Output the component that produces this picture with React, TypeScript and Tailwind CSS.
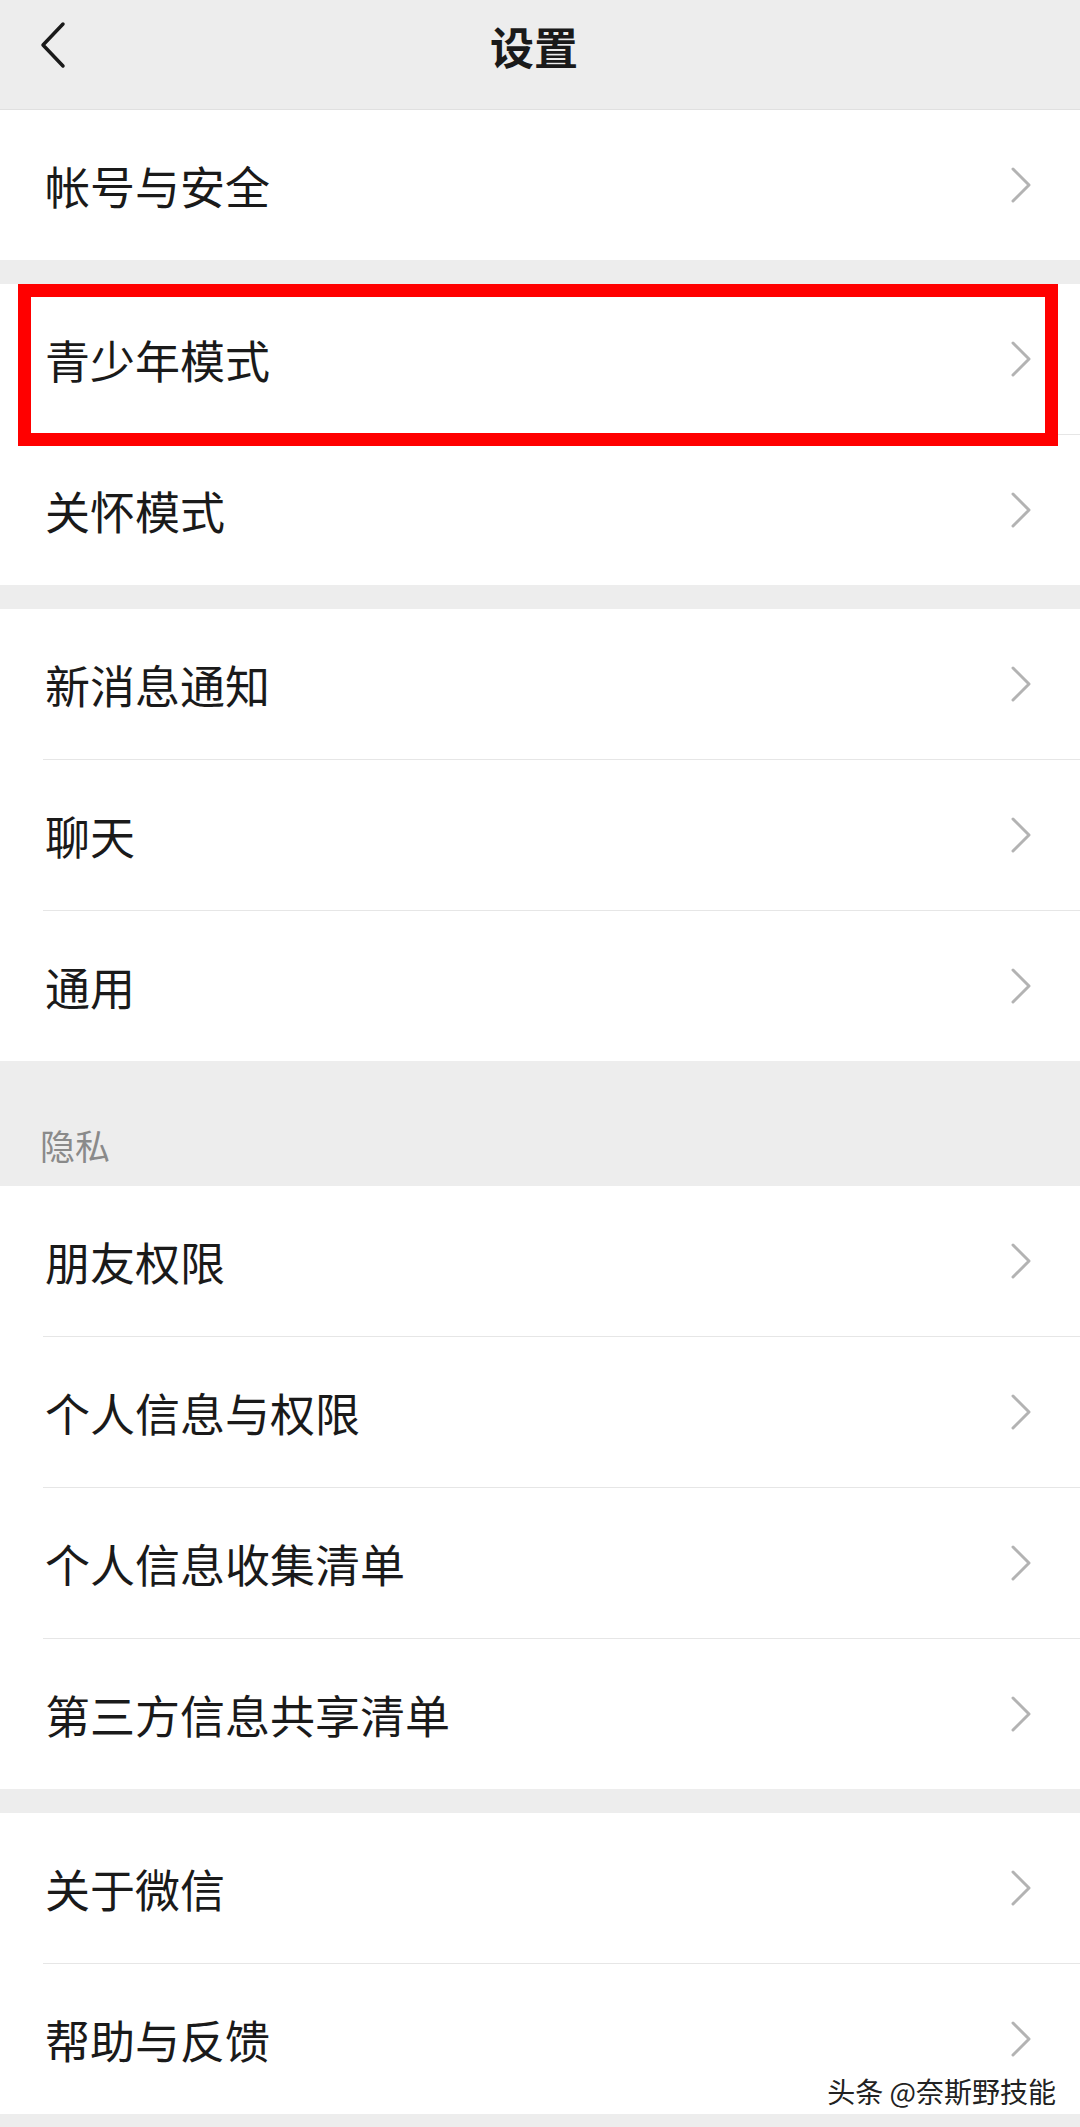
import React from "react";

type Group = { items: string[]; highlight?: string; watermark?: boolean };

const FONT = { fontFamily: '"Noto Sans CJK SC", "Noto Sans", sans-serif' };

function Chevron() {
  return (
    <svg width="22" height="36" viewBox="0 0 22 36" className="shrink-0">
      <polyline
        points="3,2 19,18 3,34"
        fill="none"
        stroke="#b3b3b3"
        strokeWidth="3"
        strokeLinecap="round"
        strokeLinejoin="round"
      />
    </svg>
  );
}

function Row({ label, last }: { label: string; last: boolean }) {
  return (
    <>
      <div className="flex h-[150px] items-center justify-between bg-white pl-[45px] pr-[48px]">
        <span className="text-[45px] leading-none text-[#1a1a1a]">{label}</span>
        <Chevron />
      </div>
      {!last && (
        <div className="bg-white pl-[43px]">
          <div className="h-px bg-[#e6e6e6]" />
        </div>
      )}
    </>
  );
}

function RowGroup({ group }: { group: Group }) {
  return (
    <div className="relative">
      {group.items.map((label, i) => (
        <Row key={label} label={label} last={i === group.items.length - 1} />
      ))}
      {group.highlight && (
        <div className="pointer-events-none absolute left-[18px] top-0 h-[162px] w-[1040px] border-[13px] border-[#ff0000]" />
      )}
      {group.watermark && (
        <div
          className="absolute bottom-[9px] right-[24px] text-[28px] leading-none text-[#222]"
          style={{ textShadow: "1px 1px 0 #fff, -1px -1px 0 #fff, 1px -1px 0 #fff, -1px 1px 0 #fff" }}
        >
          头条 @奈斯野技能
        </div>
      )}
    </div>
  );
}

const GAP = <div className="h-[24px] bg-[#ededed]" />;

export default function App() {
  return (
    <div className="min-h-[2127px] w-[1080px] bg-[#ededed]" style={FONT}>
      {/* Title bar */}
      <div className="relative flex h-[110px] items-center border-b border-[#e0e0e0] bg-[#ededed] pb-[18px] pr-[12px]">
        <svg width="30" height="50" viewBox="0 0 30 50" className="absolute left-[38px] top-[20px]">
          <polyline
            points="25,4 5,25 25,46"
            fill="none"
            stroke="#1a1a1a"
            strokeWidth="3.5"
            strokeLinecap="round"
            strokeLinejoin="round"
          />
        </svg>
        <span className="mx-auto text-[44px] font-bold leading-none text-[#1a1a1a]">设置</span>
      </div>

      <RowGroup group={{ items: ["帐号与安全"] }} />
      {GAP}
      <RowGroup group={{ items: ["青少年模式", "关怀模式"], highlight: "青少年模式" }} />
      {GAP}
      <RowGroup group={{ items: ["新消息通知", "聊天", "通用"] }} />

      {/* Privacy section header */}
      <div className="flex h-[125px] items-end bg-[#ededed] pb-[24px] pl-[40px]">
        <span className="text-[35px] leading-none text-[#8a8a8a]">隐私</span>
      </div>
      <RowGroup
        group={{ items: ["朋友权限", "个人信息与权限", "个人信息收集清单", "第三方信息共享清单"] }}
      />
      {GAP}
      <RowGroup group={{ items: ["关于微信", "帮助与反馈"], watermark: true }} />
      <div className="h-[13px] bg-[#ededed]" />
    </div>
  );
}
